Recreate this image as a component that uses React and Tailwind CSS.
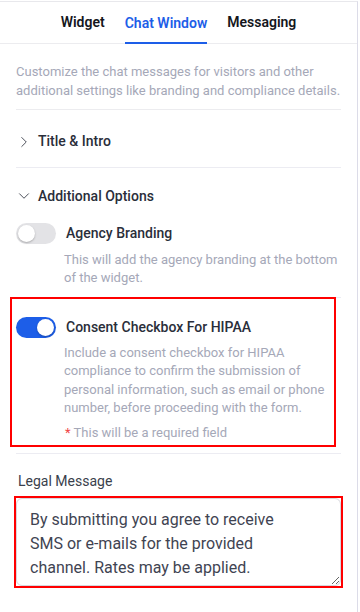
import { ChevronRight, ChevronDown } from "lucide-react";

function Toggle({ on }) {
  return (
    <span
      className={
        "relative inline-flex h-[21px] w-[40px] shrink-0 rounded-full " +
        (on ? "bg-[#1d5ee8]" : "bg-[#e3e3e6]")
      }
    >
      <span
        className={
          "absolute top-[2px] h-[17px] w-[17px] rounded-full bg-white shadow-[0_1px_2px_rgba(0,0,0,0.25)] " +
          (on ? "left-[21px]" : "left-[2px]")
        }
      />
    </span>
  );
}

export default function App() {
  return (
    <div className="h-[612px] w-[360px] overflow-hidden bg-white pt-px font-['Roboto',sans-serif]">
      <div className="h-full w-[358px] border-r border-t border-[#dcdce8] border-t-[#e8e8ec]">
        {/* tabs */}
        <div className="flex h-[42px] justify-center gap-5 border-b border-[#ececef]">
          <button className="text-[14px] font-semibold text-[#14161c]">Widget</button>
          <button className="-mb-px border-b-2 border-[#1d5ee8] pt-[3px] text-[14px] font-semibold text-[#1d5ee8]">
            Chat Window
          </button>
          <button className="text-[14px] font-semibold text-[#14161c]">Messaging</button>
        </div>

        <div className="px-4">
          <p className="border-b border-[#ececef] pb-[9px] pt-[18px] text-[13px] leading-[19px] text-[#a5a8b8]">
            Customize the chat messages for visitors and other additional settings like branding and compliance details.
          </p>

          <div className="flex h-[58px] items-center gap-[5px] border-b border-[#ececf2] pt-[6px] text-[14px] font-medium text-[#2a2e3a]">
            <ChevronRight size={18} strokeWidth={1.2} className="-ml-[1px] text-[#3a3e4a]" />
            Title &amp; Intro
          </div>

          <div className="pt-[18px]">
            <div className="flex h-[20px] items-center gap-[5px] text-[14px] font-medium text-[#2a2e3a]">
              <ChevronDown size={18} strokeWidth={1.2} className="-ml-[1px] text-[#3a3e4a]" />
              Additional Options
            </div>

            <div className="mt-[17px] flex gap-[10px] pb-[10px]">
              <Toggle on={false} />
              <div className="pt-[1px]">
                <div className="text-[14px] font-medium leading-[18px] text-[#2a2e3a]">Agency Branding</div>
                <p className="mt-[9px] -ml-[2px] text-[13px] leading-[18px] text-[#a5a8b8]">
                  This will add the agency branding at the bottom of the widget.
                </p>
              </div>
            </div>

            <div className="relative border-b border-t border-[#ececf2] pb-[11px] pt-[19px]">
              <div className="pointer-events-none absolute -left-[6px] -top-px h-[150px] w-[326px] border-2 border-[#ff0000]" />
              <div className="flex gap-[10px]">
                <Toggle on={true} />
                <div className="pt-[1px]">
                  <div className="text-[14px] font-medium leading-[18px] text-[#2a2e3a]">Consent Checkbox For HIPAA</div>
                  <p className="mt-[8px] -ml-[2px] text-[13px] leading-[18.3px] text-[#a5a8b8]">
                    Include a consent checkbox for HIPAA compliance to confirm the submission of personal information, such as email or phone number, before proceeding with the form.
                  </p>
                  <p className="mt-[7px] -ml-[1px] text-[13px] leading-[18px] text-[#a5a8b8]">
                    <span className="text-[#f04444]">*</span> This will be a required field
                  </p>
                </div>
              </div>
            </div>
          </div>

          <div className="pt-[18px]">
            <div className="pl-[2px] text-[14px] leading-[18px] text-[#3a3f4c]">Legal Message</div>
            <div className="relative mt-[8px]">
              <div className="pointer-events-none absolute -left-[2px] -top-[2px] z-10 h-[92px] w-[329px] border-2 border-[#ff0000]" />
              <textarea
                readOnly
                className="block h-[88px] w-full resize-y rounded-md border border-[#d6d7dd] pl-[13px] pr-[40px] pt-[9px] text-[16px] leading-[24px] text-[#3f4452] outline-none"
                value="By submitting you agree to receive SMS or e-mails for the provided channel. Rates may be applied."
              />
            </div>
          </div>
        </div>
      </div>
    </div>
  );
}
